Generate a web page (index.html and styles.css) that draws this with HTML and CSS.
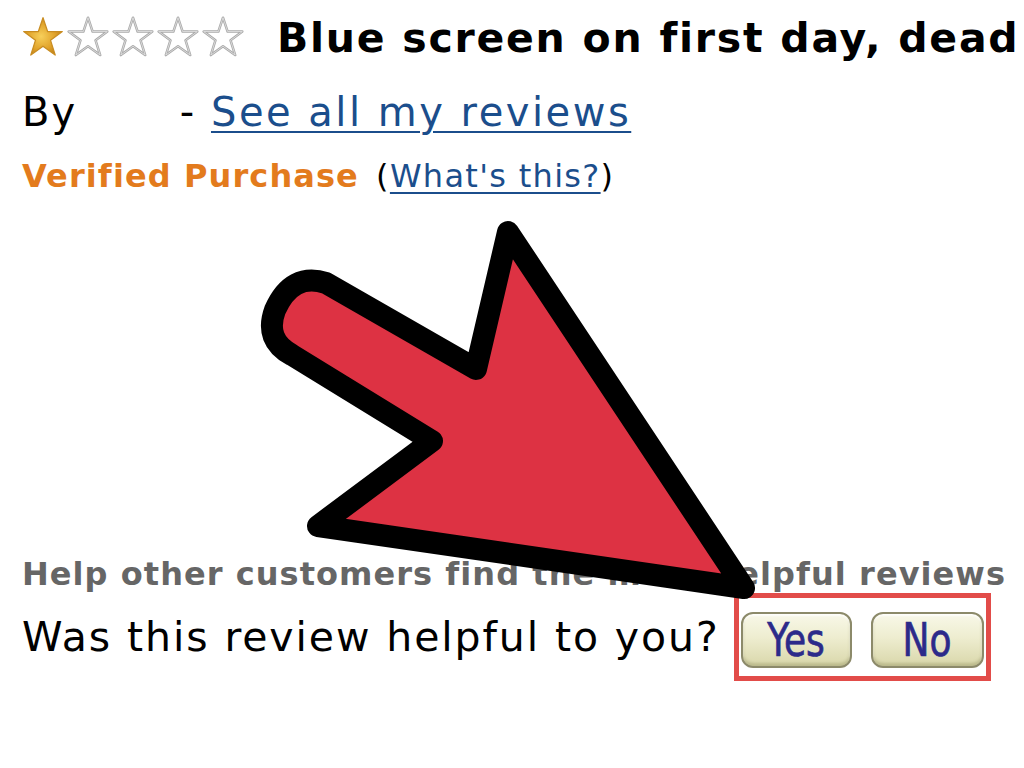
FILE: index.html
```html
<!DOCTYPE html>
<html lang="en">
<head>
<meta charset="utf-8">
<title>Review</title>
<link rel="stylesheet" href="styles.css">
</head>
<body>
<div class="page">
  <div class="title-row">
    <div class="stars">
      <svg class="star" viewBox="0 0 100 100"><defs><radialGradient id="gold" cx="45%" cy="50%" r="60%"><stop offset="0" stop-color="#f7cf5a"/><stop offset="0.6" stop-color="#e0a22a"/><stop offset="1" stop-color="#b97a14"/></radialGradient></defs><polygon points="50,4 61,37 96,37 68,58 79,93 50,72 21,93 32,58 4,37 39,37" fill="url(#gold)" stroke="#c98d22" stroke-width="3" stroke-linejoin="round"/></svg>
      <svg class="star" viewBox="0 0 100 100"><polygon points="50,4 61,37 96,37 68,58 79,93 50,72 21,93 32,58 4,37 39,37" fill="#fff" stroke="#a9a9a9" stroke-width="6" stroke-linejoin="round"/><polygon points="50,4 61,37 96,37 68,58 79,93 50,72 21,93 32,58 4,37 39,37" fill="none" stroke="#e2e2e2" stroke-width="2" stroke-linejoin="round"/></svg>
      <svg class="star" viewBox="0 0 100 100"><polygon points="50,4 61,37 96,37 68,58 79,93 50,72 21,93 32,58 4,37 39,37" fill="#fff" stroke="#a9a9a9" stroke-width="6" stroke-linejoin="round"/><polygon points="50,4 61,37 96,37 68,58 79,93 50,72 21,93 32,58 4,37 39,37" fill="none" stroke="#e2e2e2" stroke-width="2" stroke-linejoin="round"/></svg>
      <svg class="star" viewBox="0 0 100 100"><polygon points="50,4 61,37 96,37 68,58 79,93 50,72 21,93 32,58 4,37 39,37" fill="#fff" stroke="#a9a9a9" stroke-width="6" stroke-linejoin="round"/><polygon points="50,4 61,37 96,37 68,58 79,93 50,72 21,93 32,58 4,37 39,37" fill="none" stroke="#e2e2e2" stroke-width="2" stroke-linejoin="round"/></svg>
      <svg class="star" viewBox="0 0 100 100"><polygon points="50,4 61,37 96,37 68,58 79,93 50,72 21,93 32,58 4,37 39,37" fill="#fff" stroke="#a9a9a9" stroke-width="6" stroke-linejoin="round"/><polygon points="50,4 61,37 96,37 68,58 79,93 50,72 21,93 32,58 4,37 39,37" fill="none" stroke="#e2e2e2" stroke-width="2" stroke-linejoin="round"/></svg>
    </div>
    <h1 class="title">Blue screen on first day, dead</h1>
  </div>
  <div class="by-row">By <span class="author"></span>- <a class="link" href="#">See all my reviews</a></div>
  <div class="verified-row"><span class="verified">Verified Purchase</span> <span class="paren">(<a class="link" href="#">What's this?</a>)</span></div>
  <div class="help-row">Help other customers find the most helpful reviews</div>
  <div class="vote-row">
    <span class="question">Was this review helpful to you?</span>
    <div class="vote-box">
      <span class="vote-btn yes"><span class="btn-label">Yes</span></span>
      <span class="vote-btn no"><span class="btn-label">No</span></span>
    </div>
  </div>
  <svg class="arrow" viewBox="0 0 1024 768" width="1024" height="768">
    <path d="M508,232 L744,588 L318,526 L432,441 L292,355 Q264,340 275,310 Q292,272 326,283 L476,369 Z" fill="#dd3243" stroke="#000" stroke-width="22" stroke-linejoin="round"/>
  </svg>
</div>
</body>
</html>
```

FILE: styles.css
```css
html, body {
  margin: 0;
  padding: 0;
  background: #fff;
}
.page {
  position: relative;
  width: 1024px;
  height: 768px;
  overflow: hidden;
  padding-left: 22px;
  box-sizing: border-box;
  font-family: "DejaVu Sans", Verdana, sans-serif;
  color: #000;
}
.title-row {
  display: flex;
  align-items: center;
  height: 76px;
  gap: 33px;
}
.stars {
  display: flex;
  gap: 3px;
  margin-top: -2px;
}
.star {
  width: 42px;
  height: 42px;
  display: block;
}
.title {
  margin: 0;
  font-size: 41px;
  font-weight: bold;
  letter-spacing: 1.75px;
  white-space: nowrap;
}
.by-row {
  font-size: 40px;
  line-height: 72px;
  letter-spacing: 2px;
  white-space: nowrap;
}
.author {
  display: inline-block;
  width: 88px;
}
.link {
  color: #1b4e8c;
  text-decoration: underline;
  text-decoration-thickness: 2px;
  text-underline-offset: 5px;
}
.by-row .link {
  letter-spacing: 2.5px;
}
.verified-row {
  margin-top: 10px;
  font-size: 32px;
  line-height: 36px;
  white-space: nowrap;
}
.verified {
  color: #e37b1d;
  font-weight: bold;
  letter-spacing: 1.1px;
}
.paren {
  margin-left: 7px;
  letter-spacing: 1.3px;
}
.help-row {
  margin-top: 362px;
  font-size: 32px;
  font-weight: bold;
  letter-spacing: 1.05px;
  color: #666;
  white-space: nowrap;
  line-height: 36px;
}
.vote-row {
  display: flex;
  align-items: center;
  gap: 14px;
  margin-top: 1px;
}
.question {
  font-size: 41px;
  letter-spacing: 1.9px;
  white-space: nowrap;
}
.vote-box {
  display: flex;
  gap: 19px;
  border: 5px solid #e24c49;
  padding: 14px 2px 8px 2px;
}
.vote-btn {
  display: flex;
  align-items: center;
  justify-content: center;
  box-sizing: border-box;
  width: 111px;
  height: 56px;
  border: 2px solid #8c8a6a;
  border-radius: 12px;
  background: linear-gradient(#f8f8e8 0%, #eeedd0 45%, #d9d7aa 100%);
  box-shadow: inset 0 -3px 3px rgba(120,118,70,0.3), inset 0 2px 2px rgba(255,255,255,0.8);
}
.vote-btn.no {
  width: 113px;
}
.btn-label {
  display: block;
  font-family: "DejaVu Sans Condensed", "DejaVu Sans", sans-serif;
  font-size: 40px;
  line-height: 1;
  color: #2c2a8a;
  -webkit-text-stroke: 0.6px #2c2a8a;
  transform: scaleY(1.15);
}
.arrow {
  position: absolute;
  left: 0;
  top: 0;
  pointer-events: none;
}
```
